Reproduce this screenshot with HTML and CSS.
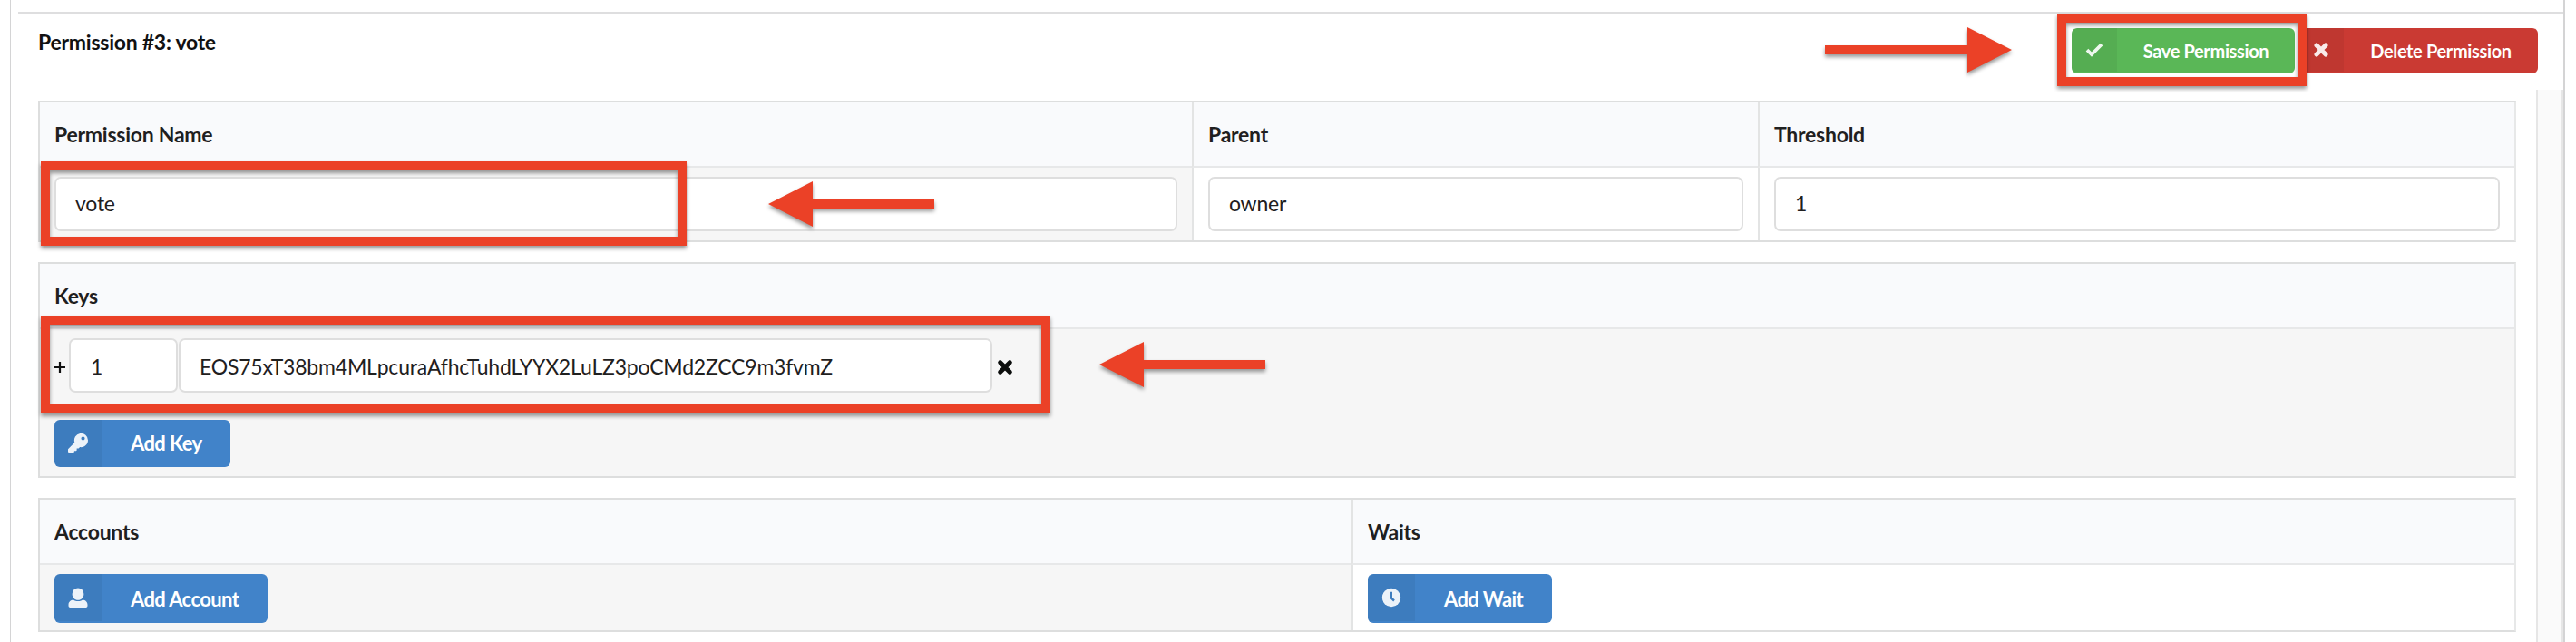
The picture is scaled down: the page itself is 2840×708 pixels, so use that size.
FILE: index.html
```html
<!DOCTYPE html>
<html lang="en">
<head>
<meta charset="utf-8">
<title>Permission #3: vote</title>
<link rel="stylesheet" href="styles.css">
</head>
<body>
<main class="panel">
  <section class="permission">
    <header class="toolbar">
      <h2 class="title">Permission #3: vote</h2>
      <div class="actions">
        <button class="btn tiny green"><span class="btn-icon"><svg width="20" height="16" viewBox="0 0 20 16"><path d="M2 8.2 7 13 18 2" fill="none" stroke="currentColor" stroke-width="3.8"/></svg></span><span class="btn-label">Save Permission</span></button>
        <button class="btn tiny red"><span class="btn-icon"><svg width="16" height="16" viewBox="0 0 16 16"><path d="M3 3 13 13M13 3 3 13" stroke="currentColor" stroke-width="5" stroke-linecap="round"/></svg></span><span class="btn-label">Delete Permission</span></button>
      </div>
    </header>
    <div class="body">
      <div class="tables">
        <div class="table cols-details">
          <div class="th">Permission Name</div>
          <div class="th">Parent</div>
          <div class="th">Threshold</div>
          <div class="td shade"><div class="input">vote</div></div>
          <div class="td"><div class="input">owner</div></div>
          <div class="td"><div class="input">1</div></div>
        </div>
        <div class="table cols-keys">
          <div class="th">Keys</div>
          <div class="td shade keys">
            <div class="key-row">
              <svg class="plus" width="12" height="12" viewBox="0 0 12 12"><path d="M6 0V12M0 6H12" stroke="#111" stroke-width="2.2"/></svg>
              <div class="input weight">1</div>
              <div class="input key">EOS75xT38bm4MLpcuraAfhcTuhdLYYX2LuLZ3poCMd2ZCC9m3fvmZ</div>
              <svg class="remove" width="18" height="18" viewBox="0 0 18 18"><path d="M3.7 3.7 14.3 14.3M14.3 3.7 3.7 14.3" stroke="#0c0e0d" stroke-width="5" stroke-linecap="round"/></svg>
            </div>
            <button class="btn blue"><span class="btn-icon"><svg width="22" height="22" viewBox="0 0 512 512"><path fill="currentColor" d="M512 176c0 97-79 176-176 176-11 0-22-1-33-3l-24 27a24 24 0 0 1-18 8h-37v40a24 24 0 0 1-24 24h-40v40a24 24 0 0 1-24 24H24a24 24 0 0 1-24-24v-78c0-6 3-12 7-17l162-162a176 176 0 1 1 343-55zM336 128a48 48 0 1 0 96 0 48 48 0 1 0-96 0z"/></svg></span><span class="btn-label">Add Key</span></button>
          </div>
        </div>
        <div class="table cols-lists">
          <div class="th">Accounts</div>
          <div class="th">Waits</div>
          <div class="td shade"><button class="btn tall blue"><span class="btn-icon"><svg width="22" height="22" viewBox="0 0 22 22"><path fill="currentColor" d="M11 .5a6.4 6.4 0 0 1 6.4 6.4c0 3.8-2.8 6.9-6.4 6.9s-6.4-3.1-6.4-6.9A6.4 6.4 0 0 1 11 .5zM5.8 13.6c3 2 7.4 2 10.4 0 3 .2 5.3 2.4 5.3 5.4v1c0 1.1-.8 2-1.9 2H2.4C1.3 22 .5 21.1.5 20v-1c0-3 2.3-5.2 5.3-5.4z"/></svg></span><span class="btn-label">Add Account</span></button></div>
          <div class="td"><button class="btn tall blue"><span class="btn-icon"><svg width="22" height="22" viewBox="0 0 22 22"><circle cx="11" cy="11" r="10.2" fill="currentColor"/><path d="M10.8 4.8V11.5L14 14.5" fill="none" stroke="#3d7cbe" stroke-width="2.4"/></svg></span><span class="btn-label">Add Wait</span></button></div>
        </div>
      </div>
      <div class="track"></div>
    </div>
  </section>
</main>
<div class="callout callout-save"></div>
<div class="callout callout-name"></div>
<div class="callout callout-key"></div>
<svg class="arrow arrow-save" width="206" height="50" viewBox="0 0 206 50"><path d="M0 20H157V0L206 25 157 50V30H0z"/></svg>
<svg class="arrow arrow-name" width="184" height="50" viewBox="0 0 184 50"><path d="M0 25 49 0V20H183V30H49V50z"/></svg>
<svg class="arrow arrow-key" width="184" height="50" viewBox="0 0 184 50"><path d="M0 25 49 0V20H183V30H49V50z"/></svg>
</body>
</html>
```

FILE: styles.css
```css
* { box-sizing: border-box; }

body {
  position: relative;
  margin: 0;
  width: 2840px;
  height: 708px;
  overflow: hidden;
  background: #fff;
  color: #1f2020;
  font: 23px/30px Lato, sans-serif;
  letter-spacing: -.25px;
}

.panel {
  height: 708px;
  margin: 0 12px 0 11px;
  padding: 13px 0 0 8px;
  border: solid #d4d4d5;
  border-width: 0 2px 0 1px;
}

.permission { border-top: 2px solid #dededf; }

.toolbar {
  display: flex;
  justify-content: space-between;
  height: 84px;
  padding: 16px 28px 0 22px;
}

.title {
  margin: 0;
  color: #111;
  font-size: 23px;
  line-height: 30px;
}

.actions { display: flex; gap: 4px; }

.btn {
  display: flex;
  width: max-content;
  height: 52px;
  padding: 0;
  border: 0;
  border-radius: 6px;
  overflow: hidden;
  color: #fff;
  font: bold 22px/52px Lato, sans-serif;
  letter-spacing: -.6px;
  white-space: nowrap;
}

.btn-icon {
  display: flex;
  flex: none;
  align-items: center;
  justify-content: center;
  width: 52px;
  height: 52px;
  background: rgba(0, 0, 0, .05);
  color: rgba(255, 255, 255, .9);
}

.btn-label { padding: 0 32px; }
.btn.tall { height: 54px; line-height: 56px; }

.btn.tiny { height: 50px; font-size: 20px; line-height: 50px; letter-spacing: -.35px; }
.tiny .btn-icon { width: 50px; height: 48px; }
.tiny .btn-label { flex: 1; padding: 0; text-align: center; }
.btn.green { width: 246px; }
.btn.red { width: 264px; }

.green { background: #5ab757; }
.red { background: #ca3a33; }
.blue { background: #4183c9; }

.body {
  display: flex;
  justify-content: space-between;
  height: 609px;
  padding-left: 22px;
}

.tables {
  display: flex;
  flex-direction: column;
  gap: 22px;
  width: 2732px;
  padding-top: 12px;
}

.track {
  width: 30px;
  border: solid #e6e6e6;
  border-width: 0 2px;
  background: #fafafa;
}

.table {
  display: grid;
  border: 2px solid #dddede;
  border-right-color: #e7e8e8;
}

.cols-details { grid-template-columns: 1270px 624px 1fr; }
.cols-lists { grid-template-columns: 1446px 1fr; }

.th {
  height: 72px;
  padding: 20px 16px;
  border-bottom: 2px solid #e7e8e9;
  background: #f9fafc;
  font-weight: bold;
}

.td { height: 80px; padding: 10px 16px; }
.cols-lists .td { height: 72px; }
.shade { background: #f6f6f6; }

.cols-details > :not(:nth-child(3n+1)),
.cols-lists > :nth-child(even) {
  border-left: 2px solid #e3e4e4;
}

.input {
  height: 60px;
  padding: 12px 21px;
  border: 2px solid #dedede;
  border-radius: 7px;
  background: #fff;
}

.cols-keys .keys { height: 162px; }

.key-row {
  display: flex;
  align-items: center;
  height: 60px;
  margin-bottom: 30px;
}

.plus { margin-right: 4px; margin-top: 4px; }
.key-row .input { padding: 14px 22px 12px; }
.key-row .weight { width: 120px; margin-right: 1px; }
.key-row .key { width: 897px; padding-left: 21px; letter-spacing: -.2px; }
.remove { margin: 4px 0 0 5px; }

.callout {
  position: absolute;
  border: 10px solid #eb4127;
  filter: drop-shadow(0 3px 2px rgba(0, 0, 0, .4));
}

.callout-save { left: 2268px; top: 15px; width: 275px; height: 80px; }
.callout-name { left: 45px; top: 178px; width: 712px; height: 93px; }
.callout-key { left: 45px; top: 348px; width: 1113px; height: 108px; }

.arrow {
  position: absolute;
  overflow: visible;
  fill: #eb4127;
  filter: drop-shadow(0 3px 2px rgba(0, 0, 0, .4));
}

.arrow-save { left: 2012px; top: 30px; }
.arrow-name { left: 847px; top: 200px; }
.arrow-key { left: 1212px; top: 377px; }
```
